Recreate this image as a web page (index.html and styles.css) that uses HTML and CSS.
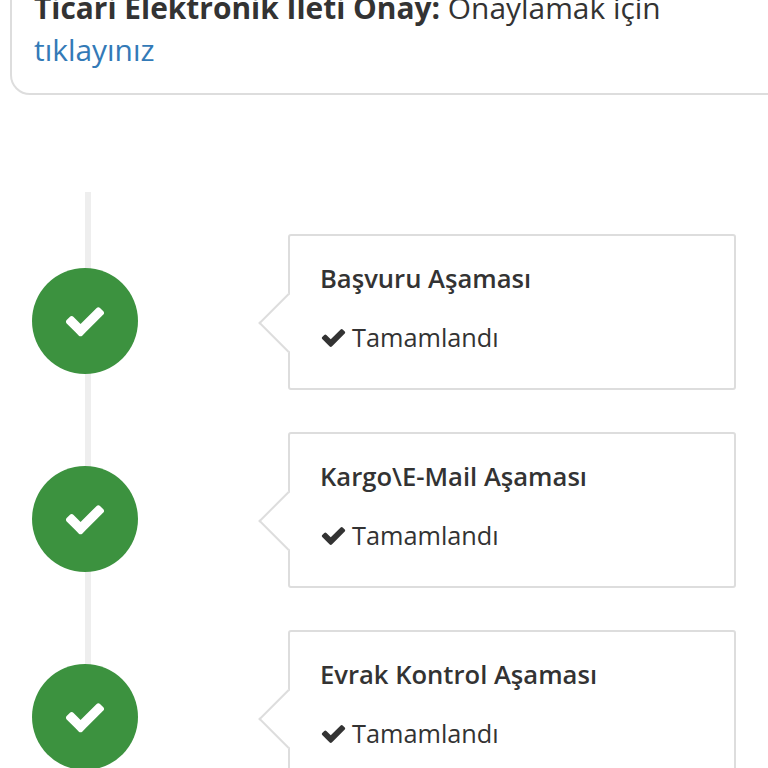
FILE: index.html
```html
<!DOCTYPE html>
<html lang="tr">
<head>
<meta charset="utf-8">
<title>Başvuru Takibi</title>
<link rel="stylesheet" href="styles.css">
</head>
<body>
<section class="notice">
  <p class="notice-text"><strong>Ticari Elektronik İleti Onay:</strong> Onaylamak için <a href="#">tıklayınız</a></p>
</section>
<ul class="timeline">
  <li class="step">
    <span class="badge"><svg class="badge-icon" viewBox="0 0 1792 1792"><path d="M1671 566q0 40-28 68l-724 724-136 136q-28 28-68 28t-68-28l-136-136-362-362q-28-28-28-68t28-68l136-136q28-28 68-28t68 28l294 295 656-657q28-28 68-28t68 28l136 136q28 28 28 68z"/></svg></span>
    <div class="panel">
      <h3 class="panel-title">Başvuru Aşaması</h3>
      <p class="panel-status"><svg class="status-icon" viewBox="0 0 1792 1792"><path d="M1671 566q0 40-28 68l-724 724-136 136q-28 28-68 28t-68-28l-136-136-362-362q-28-28-28-68t28-68l136-136q28-28 68-28t68 28l294 295 656-657q28-28 68-28t68 28l136 136q28 28 28 68z"/></svg>Tamamlandı</p>
    </div>
  </li>
  <li class="step">
    <span class="badge"><svg class="badge-icon" viewBox="0 0 1792 1792"><path d="M1671 566q0 40-28 68l-724 724-136 136q-28 28-68 28t-68-28l-136-136-362-362q-28-28-28-68t28-68l136-136q28-28 68-28t68 28l294 295 656-657q28-28 68-28t68 28l136 136q28 28 28 68z"/></svg></span>
    <div class="panel">
      <h3 class="panel-title">Kargo\E-Mail Aşaması</h3>
      <p class="panel-status"><svg class="status-icon" viewBox="0 0 1792 1792"><path d="M1671 566q0 40-28 68l-724 724-136 136q-28 28-68 28t-68-28l-136-136-362-362q-28-28-28-68t28-68l136-136q28-28 68-28t68 28l294 295 656-657q28-28 68-28t68 28l136 136q28 28 28 68z"/></svg>Tamamlandı</p>
    </div>
  </li>
  <li class="step">
    <span class="badge"><svg class="badge-icon" viewBox="0 0 1792 1792"><path d="M1671 566q0 40-28 68l-724 724-136 136q-28 28-68 28t-68-28l-136-136-362-362q-28-28-28-68t28-68l136-136q28-28 68-28t68 28l294 295 656-657q28-28 68-28t68 28l136 136q28 28 28 68z"/></svg></span>
    <div class="panel">
      <h3 class="panel-title">Evrak Kontrol Aşaması</h3>
      <p class="panel-status"><svg class="status-icon" viewBox="0 0 1792 1792"><path d="M1671 566q0 40-28 68l-724 724-136 136q-28 28-68 28t-68-28l-136-136-362-362q-28-28-28-68t28-68l136-136q28-28 68-28t68 28l294 295 656-657q28-28 68-28t68 28l136 136q28 28 28 68z"/></svg>Tamamlandı</p>
    </div>
  </li>
</ul>
</body>
</html>
```

FILE: styles.css
```css
html, body {
  margin: 0;
  padding: 0;
  height: 768px;
  overflow: hidden;
  background: #fff;
}

body {
  font-family: "Open Sans", "Noto Sans", sans-serif;
  color: #333;
}

.notice {
  box-sizing: border-box;
  width: 780px;
  height: 122px;
  margin: -27px 0 0 10px;
  padding: 12px 22px 0;
  border: 2px solid #ddd;
  border-radius: 20px;
}

.notice-text {
  margin: 0;
  width: 680px;
  font-size: 29.9px;
  line-height: 42px;
}

.notice-text strong {
  font-weight: 700;
}

.notice-text a {
  color: #337ab7;
  text-decoration: none;
}

.timeline {
  position: relative;
  list-style: none;
  margin: 97px 0 0;
  padding: 42px 32px 0;
}

.timeline::before {
  content: "";
  position: absolute;
  top: 0;
  bottom: 0;
  left: 85px;
  width: 6px;
  background: #eee;
}

.step {
  position: relative;
  display: flex;
  align-items: center;
  height: 156px;
  margin-bottom: 42.2px;
}

.badge {
  flex: none;
  display: flex;
  align-items: center;
  justify-content: center;
  width: 106px;
  height: 106px;
  margin-top: 18px;
  border-radius: 50%;
  background: #3c923f;
}

.badge-icon {
  width: 44px;
  height: 44px;
  fill: #fff;
}

.panel {
  position: relative;
  box-sizing: border-box;
  width: 448px;
  height: 156px;
  margin-left: 150px;
  padding: 26px 30px 0;
  border: 2px solid #ddd;
  border-radius: 3px;
  background: #fff;
}

.panel::before {
  content: "";
  position: absolute;
  top: 66px;
  left: -23px;
  width: 42px;
  height: 42px;
  box-sizing: border-box;
  border-left: 2px solid #ddd;
  border-bottom: 2px solid #ddd;
  background: #fff;
  transform: rotate(45deg);
}

.panel-title {
  margin: 0;
  font-size: 25.6px;
  line-height: 33px;
  font-weight: 600;
}

.panel-status {
  display: flex;
  align-items: center;
  margin: 26px 0 0;
  font-size: 25.3px;
  line-height: 33px;
}

.status-icon {
  flex: none;
  width: 27px;
  height: 27px;
  margin: 0 5px 0 0;
  fill: #333;
}
```
